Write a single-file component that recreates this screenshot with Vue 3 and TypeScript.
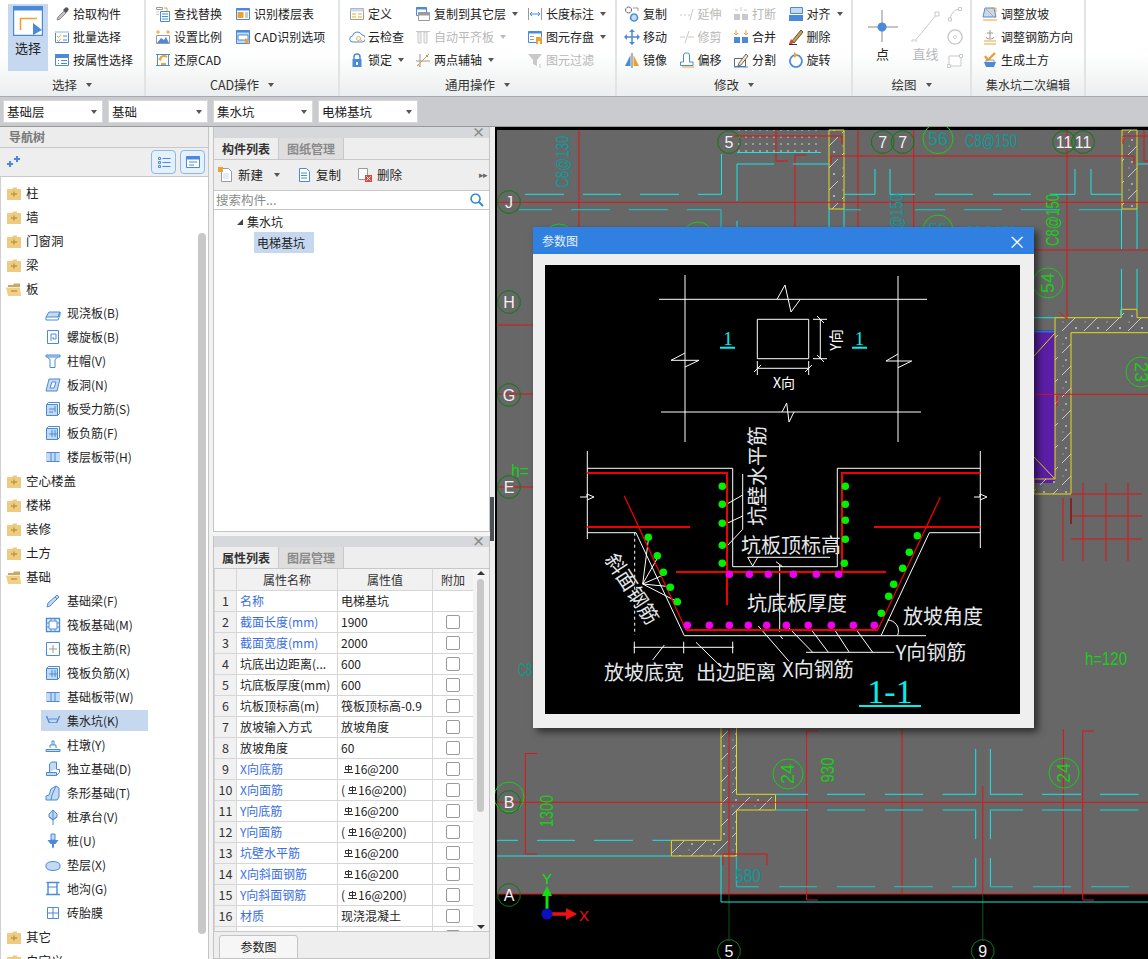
<script setup lang="ts">
import { h } from 'vue'

type Stroke = [string, string?, string?, number?]
const B = '#4a8ad8', O = '#f0a030', G = '#9a9a9a', L = '#c4d9f2', D = '#666', R = '#d84a3a', T = '#c9c9c9'
const icons: Record<string, Stroke[]> = {
  pick: [['M3 14l1-3 6-6 2 2-6 6z', '#c4c4c4', '#8a8a8a'], ['M9 4l3 3 2-2a2 2 0 0 0-3-3z', '#555']],
  batch: [['M1.5 2.5h13v11h-13z', '#fff', B], ['M1 2h14v2h-14z', L], ['M3 7l1.5 1.5L7 5.5M3 11l1.5 1.5L7 9.5', 'none', O], ['M9 7h4M9 11h4', 'none', B]],
  attr: [['M1.5 2.5h13v11h-13z', '#fff', B], ['M1.5 2.5h13v3h-13z', B, B], ['M4 8.5h1M7 8.5h6M4 11.5h1M7 11.5h6', 'none', B]],
  find: [['M1.5 1.5h6v2h-6z', 'none', G], ['M9 2h3v3', 'none', O], ['M5.5 5.5h9v10h-9z', '#fff', B], ['M7 8h6M7 10.5h6M7 13h6', 'none', B], ['M1 6h3M1 8.5h3', 'none', T]],
  floor: [['M1.5 2.5h13v11h-13z', '#fff', B], ['M1.5 2.5h13v2h-13z', B], ['M2.5 6h6v6h-6z', O], ['M10 7h3M10 9h3M10 11h3', 'none', G]],
  scale: [['M1.5 6.5h13v8h-13z', '#fff', G], ['M2 14l4-5 3 2 2-3 3 6z', B], ['M1 3h4M3 1v4', 'none', O], ['M11 3h4M13 1v4', 'none', O]],
  cadopt: [['M1.5 1.5h13v13h-13z', L, B], ['M1.5 1.5h13v2h-13z', B], ['M3 6h10v5H3z', '#fff', B], ['M10 9l5 3-2 1 1 2-1 .5-1-2-2 1z', O]],
  restore: [['M2.5 2.5h11v11h-11z', 'none', B], ['M1 2.5h3M12 2.5h3M1 13.5h3M12 13.5h3', 'none', B], ['M12 5a5 5 0 0 0-7 1', 'none', O, 2], ['M3 7l3 2 1-4z', O], ['M6 12h5', 'none', O, 2]],
  define: [['M1.5 2.5h13v11h-13z', '#fff', G], ['M1.5 2.5h13v3h-13z', L], ['M3 7h4v2H3zM3 10h4v2H3z', '#f6d28a'], ['M9 7h4v2H9zM9 10h4v2H9z', '#f6d28a']],
  cloud: [['M4 13a3 3 0 0 1-.5-6A5 5 0 0 1 13 6a3.5 3.5 0 0 1 0 7z', '#fff', B], ['M9.5 7.5a2 2 0 1 1-.1 0M11 10.5l2 1.5', 'none', O]],
  lock: [['M5 7V5a3 3 0 0 1 6 0v2', 'none', B, 1.5], ['M3.5 7h9v8h-9z', B], ['M7 10h2v3H7z', '#fff']],
  twopt: [['M1 9h14M5 2v13', 'none', G], ['M2 14L14 2', 'none', O], ['M3 12.5l2 2M11 3l2 2', 'none', G]],
  copyl: [['M1.5 1.5h10v8h-10z', '#fff', B], ['M1.5 1.5h10v2h-10z', B], ['M3.5 6.5h11v8h-11z', '#fff', G], ['M3.5 6.5h11v3h-11z', G]],
  autoflat: [['M1 2.5h14', 'none', T], ['M3 3h3v11H3zM9 3h3v11H9z', '#f0f0f0', T]],
  dim: [['M1.5 2v12M14.5 2v12', 'none', G], ['M3 8h10M3 8l2-2M3 8l2 2M13 8l-2-2M13 8l-2 2', 'none', B]],
  save: [['M1.5 2.5h13v11h-13z', '#fff', B], ['M1.5 2.5h13v2h-13z', B], ['M3 7h4v1H3zM3 10h4v1H3z', G], ['M9 8h6v7H9z', O], ['M11 12h2v3h-2z', '#fff']],
  filter: [['M1 2h14l-5 6v6l-4-2V8z', T], ['M12 13h2M12 15h2', 'none', T]],
  copy: [['M4.5 1a3 3 0 1 0 .1 0', '#fff', D], ['M10 8a3.5 3.5 0 1 0 .1 0', L, B, 1.5], ['M9 2h5v3', 'none', G]],
  move: [['M8 2v12M2 8h12', 'none', B, 1.5], ['M8 0l3 3H5zM8 16l3-3H5zM0 8l3-3v6zM16 8l-3-3v6z', B]],
  mirror: [['M8 1v15', 'none', D], ['M6.5 3v11H1z', B], ['M9.5 3v11H15z', O]],
  extend: [['M1 9h2M5 9h2M9 9h2', 'none', T], ['M14 3l-3 11', 'none', T]],
  trim: [['M1 8h5M9 8h6', 'none', T], ['M10 2L6 14', 'none', T]],
  offset: [['M1.5 13.5V10h3V3a2 2 0 0 1 2-2h2a2 2 0 0 1 2 2v7h3.5v3.5z', '#fff', B], ['M3 15h12', 'none', O]],
  breakk: [['M1 8h6v6H1zM9 8h6v6H9z', T], ['M8 1v4M2 4h3M11 4h3', 'none', T]],
  merge: [['M1 8h6v6H1zM9 8h6v6H9z', B], ['M3 1v5M1 4l2 2 2-2M13 1v5M11 4l2 2 2-2', 'none', O]],
  split: [['M1.5 6.5h11v8h-11z', '#fff', D], ['M6 11L13 2l2 2-7 9-3 1z', '#f8e8c0', D], ['M1 15h14', 'none', B]],
  align: [['M2.5 1.5h12v6h-12z', L, B], ['M1 9h14v6H1z', B]],
  del: [['M4 12L13 1l2 2-9 11z', '#c9a060', '#6a5030'], ['M3 10l3 3-2 2H1z', R], ['M1 15.5h8', 'none', '#333']],
  rotate: [['M8 3a6 6 0 1 1-.1 0', '#fff', B, 1.6], ['M6 0l4 3-4 3z', O]],
  adjslope: [['M3 2h9l2 9H1z', L, B], ['M1 14h14M3 2l10 10', 'none', O], ['M9 2h5v4', 'none', O]],
  adjbar: [['M8 1v8M5 4h6', 'none', G], ['M4 8a4 2 0 0 0 8 0', 'none', G], ['M2 12h12M2 15h12', 'none', O]],
  earth: [['M3 4l3 4 7-7', 'none', O, 2.4], ['M2 10h12l-2 5H4z', B], ['M4 10v-2h8v2', 'none', G]],
  newdoc: [['M3.5 1.5h7l3 3v10h-10z', '#fff', G], ['M0 0h5v5H0z', O], ['M5 7h6M5 9h6M5 11h6', 'none', L]],
  copydoc: [['M3.5 1.5h7l3 3v10h-10z', '#fff', B], ['M5 6h6M5 8.5h6M5 11h6', 'none', B]],
  deldoc: [['M1.5 1.5h9v11h-9z', '#fff', G], ['M8 8h7v7H8z', R], ['M9.5 9.5l4 4M13.5 9.5l-4 4', 'none', '#fff']],
  search: [['M6.5 2a4.5 4.5 0 1 0 .1 0', 'none', '#2f8ac8', 1.5], ['M10 10l4 4', 'none', '#2f8ac8', 2]],
  slab: [['M1 12l3-5h11l-2 5z', L, B], ['M13 12l2-5v3l-2 5H1v-3', 'none', B]],
  spiral: [['M2.5 1.5h11v13h-11z', 'none', B], ['M6 12V5h5v5H8V8', 'none', B]],
  cap: [['M1 2h14v2H1z', L, B], ['M2.5 4.5l2.5 2v8h5v-8l2.5-2', 'none', B]],
  hole: [['M1 14l3-12h11l-3 12z', L, B], ['M5 11l2-6h4l-2 6z', '#fff', B]],
  force: [['M1.5 3.5h11v11h-11z', L, B], ['M1.5 3.5l2-2h11v11l-2 2', 'none', B], ['M4 8h6M10 5v6M4 11h4', 'none', B]],
  neg: [['M1.5 3.5h11v11h-11z', L, B], ['M1.5 3.5l2-2h11v11l-2 2', 'none', B], ['M7 5v7M10 5v7M4 9h8', 'none', B]],
  band: [['M1 3h14v10H1z', L], ['M1.5 3.5h13M1.5 12.5h13M6 3v10M10 3v10', 'none', B]],
  beam: [['M2 14l1-4 9-8 2 2-9 9z', L, B], ['M10 4l2 2', 'none', B]],
  raft: [['M1.5 1.5h13v13h-13z', 'none', B, 1.4], ['M4 4h8v8H4z', 'none', B], ['M1 6h3M1 10h3M12 6h3M12 10h3M6 1v3M10 1v3M6 12v3M10 12v3', 'none', B]],
  main: [['M1.5 1.5h13v13h-13z', '#fff', B], ['M8 4v8M4 8h8', 'none', G]],
  pit: [['M1.5 3l3 7h7l3-7', 'none', B, 1.4], ['M1 10l3 4h8l3-4z', L], ['M4 6h8', 'none', B]],
  pier: [['M1 12.5h14v2H1z', L, B], ['M5 11V8h6v3', 'none', B], ['M7 8V4h2v4', 'none', B]],
  indep: [['M1.5 11.5h10v3h-10z', L, B], ['M11.5 14.5l3-3v-3h-3', 'none', B], ['M4.5 11V3l2-2h5v7', L, B]],
  stripe: [['M1 15V11l3-1 2-6 5-3 3 2v9l-2 3z', L, B], ['M6 15l1-5 4-9', 'none', B]],
  pcap: [['M8 1l4 4v3l-4 3-4-3V5z', L, B], ['M8 1v15M5 8l3 3 3-3', 'none', B]],
  pile: [['M6 1h4v6H6z', L, B], ['M2.5 7h11l-3 4H5.500z', B], ['M7 11h2v3L8 15.500 7 14z', B]],
  cushion: [['M1 8a7 3.500 0 0 1 14 0v2a7 3.500 0 0 1-14 0z', L, B]],
  trench: [['M1.500 1.500h13M3 2v11M12 2v11M1 13.500h14', 'none', B, 1.400], ['M3 6h9', 'none', B]],
  brick: [['M2.500 2.500h11v11h-11z', 'none', B], ['M8 2v12M2 8h12', 'none', B]],
  folder: [['M1 4h5l1-1.500h4v1.500h4v11H1z', '#edcb82'], ['M5 9h6M8 6.500v5', 'none', '#c4993a', 1.500]],
  open: [['M2 4h5l1-1.500h6V6H2z', '#c8a862'], ['M0 6.500h14l1 8.500H2z', '#f0cf88'], ['M5 10h6', 'none', '#c4993a', 1.500]],
  plusdots: [['M1 10h6M4 7v6', 'none', B, 2], ['M8 5h6M11 2v6', 'none', B, 2]],
  listv: [['M2.500 3.500h2v2h-2zM2.500 7.500h2v2h-2zM2.500 11.500h2v2h-2z', 'none', B], ['M6.500 4.500h8M6.500 8.500h8M6.500 12.500h8', 'none', B]],
  winv: [['M1.500 2.500h13v11h-13z', '#fff', B], ['M1.500 2.500h13v3h-13z', B], ['M4 8h8M4 11h5', 'none', B]],
  sel: [['M.5 .5h29v29H.500z', '#fff', '#4a8ad8', 1.400], ['M.5 .5h29v4H.500z', '#4a8ad8'], ['M7.500 24V12.500H24', 'none', O, 1.600], ['M20 17l9 7-9 5z', '#4a8ad8']],
  pt: [['M16 2v36M2 19h30', 'none', '#8a8a8a'], ['M16 14.500a4.500 4.500 0 1 0 .1 0', '#4a8ad8']],
  ln: [['M5 34L28 6', 'none', T], ['M3 32h4v4H3zM26 4h4v4h-4z', '#fff', T]],
  arc: [['M3 13c1-6 5-10 10-10', 'none', T], ['M1.500 12h3v3h-3zM11.500 1.500h3v3h-3z', '#fff', T]],
  circ: [['M8 1a7 7 0 1 0 .1 0', '#fff', T, 1.400], ['M8 6.500a1.500 1.500 0 1 0 .1 0', 'none', T]],
  rec: [['M2 4h12v10H2z', '#fff', T], ['M12.500 2.500h3v3h-3zM.5 12.500h3v3h-3z', '#fff', T]],
}

const Ic = (p: { n: string; s?: number }) => {
  const s = p.s || 16
  return h('svg', { viewBox: `0 0 ${s} ${s}`, width: s, height: s, class: 'ic' },
    icons[p.n].map(a => h('path', { d: a[0], fill: a[1] || 'none', stroke: a[2] || 'none', 'stroke-width': a[3] || 1 })))
}
Ic.props = ['n', 's']

type Item = { i?: string; t?: string; off?: boolean; car?: boolean }
type Group = { cls: string; label: string; car?: boolean; big?: { n: string; s: number; t: string; on?: boolean; off?: boolean }[]; cols: Item[][] }
const groups: Group[] = [
  { cls: 'g1', label: '选择', car: true, big: [{ n: 'sel', s: 30, t: '选择', on: true }], cols: [[{ i: 'pick', t: '拾取构件' }, { i: 'batch', t: '批量选择' }, { i: 'attr', t: '按属性选择' }]] },
  { cls: 'g2', label: 'CAD操作', car: true, cols: [[{ i: 'find', t: '查找替换' }, { i: 'scale', t: '设置比例' }, { i: 'restore', t: '还原CAD' }], [{ i: 'floor', t: '识别楼层表' }, { i: 'cadopt', t: 'CAD识别选项' }]] },
  { cls: 'g3', label: '通用操作', car: true, cols: [
    [{ i: 'define', t: '定义' }, { i: 'cloud', t: '云检查' }, { i: 'lock', t: '锁定', car: true }],
    [{ i: 'copyl', t: '复制到其它层', car: true }, { i: 'autoflat', t: '自动平齐板', off: true, car: true }, { i: 'twopt', t: '两点辅轴', car: true }],
    [{ i: 'dim', t: '长度标注', car: true }, { i: 'save', t: '图元存盘', car: true }, { i: 'filter', t: '图元过滤', off: true }]] },
  { cls: 'g4', label: '修改', car: true, cols: [
    [{ i: 'copy', t: '复制' }, { i: 'move', t: '移动' }, { i: 'mirror', t: '镜像' }],
    [{ i: 'extend', t: '延伸', off: true }, { i: 'trim', t: '修剪', off: true }, { i: 'offset', t: '偏移' }],
    [{ i: 'breakk', t: '打断', off: true }, { i: 'merge', t: '合并' }, { i: 'split', t: '分割' }],
    [{ i: 'align', t: '对齐', car: true }, { i: 'del', t: '删除' }, { i: 'rotate', t: '旋转' }]] },
  { cls: 'g5', label: '绘图', car: true, big: [{ n: 'pt', s: 34, t: '点' }, { n: 'ln', s: 34, t: '直线', off: true }], cols: [[{ i: 'arc' }, { i: 'circ' }, { i: 'rec' }]] },
  { cls: 'g6', label: '集水坑二次编辑', cols: [[{ i: 'adjslope', t: '调整放坡' }, { i: 'adjbar', t: '调整钢筋方向' }, { i: 'earth', t: '生成土方' }]] },
]
const combos = ['基础层', '基础', '集水坑', '电梯基坑']

type Node = { t: string; i?: string; f?: 'closed' | 'open'; sel?: boolean }
const tree: Node[] = [
  { t: '柱', f: 'closed' }, { t: '墙', f: 'closed' }, { t: '门窗洞', f: 'closed' }, { t: '梁', f: 'closed' }, { t: '板', f: 'open' },
  { t: '现浇板(B)', i: 'slab' }, { t: '螺旋板(B)', i: 'spiral' }, { t: '柱帽(V)', i: 'cap' }, { t: '板洞(N)', i: 'hole' }, { t: '板受力筋(S)', i: 'force' }, { t: '板负筋(F)', i: 'neg' }, { t: '楼层板带(H)', i: 'band' },
  { t: '空心楼盖', f: 'closed' }, { t: '楼梯', f: 'closed' }, { t: '装修', f: 'closed' }, { t: '土方', f: 'closed' }, { t: '基础', f: 'open' },
  { t: '基础梁(F)', i: 'beam' }, { t: '筏板基础(M)', i: 'raft' }, { t: '筏板主筋(R)', i: 'main' }, { t: '筏板负筋(X)', i: 'neg' }, { t: '基础板带(W)', i: 'band' }, { t: '集水坑(K)', i: 'pit', sel: true },
  { t: '柱墩(Y)', i: 'pier' }, { t: '独立基础(D)', i: 'indep' }, { t: '条形基础(T)', i: 'stripe' }, { t: '桩承台(V)', i: 'pcap' }, { t: '桩(U)', i: 'pile' }, { t: '垫层(X)', i: 'cushion' }, { t: '地沟(G)', i: 'trench' }, { t: '砖胎膜', i: 'brick' },
  { t: '其它', f: 'closed' }, { t: '自定义', f: 'closed' },
]

type Row = { n: string; v: string; blue?: boolean; bar?: 'plain' | 'paren'; nochk?: boolean }
const rows: Row[] = [
  { n: '名称', v: '电梯基坑', blue: true, nochk: true },
  { n: '截面长度(mm)', v: '1900', blue: true }, { n: '截面宽度(mm)', v: '2000', blue: true },
  { n: '坑底出边距离(...', v: '600' }, { n: '坑底板厚度(mm)', v: '600' }, { n: '坑板顶标高(m)', v: '筏板顶标高-0.9' },
  { n: '放坡输入方式', v: '放坡角度' }, { n: '放坡角度', v: '60' },
  { n: 'X向底筋', v: '16@200', blue: true, bar: 'plain' }, { n: 'X向面筋', v: '16@200', blue: true, bar: 'paren' },
  { n: 'Y向底筋', v: '16@200', blue: true, bar: 'plain' }, { n: 'Y向面筋', v: '16@200', blue: true, bar: 'paren' },
  { n: '坑壁水平筋', v: '16@200', blue: true, bar: 'plain' }, { n: 'X向斜面钢筋', v: '16@200', blue: true, bar: 'plain' },
  { n: 'Y向斜面钢筋', v: '16@200', blue: true, bar: 'paren' }, { n: '材质', v: '现浇混凝土', blue: true }, { n: '混凝土类型', v: '(低流动混凝土)', blue: true },
]

/* ---------- CAD model (drawing coordinates equal page pixels) ---------- */
const hseg = (y: number, xs: number[][]) => xs.map(a => `${a[0]},${y} ${a[1]},${y}`)
type Lines = { c: string; w: number; d?: string; p: string[] }
const cad: Lines[] = [
  { c: '#e01515', w: 1, p: ['496,201.300 1148,201.300', '496,801.300 1148,801.300', '496,893 1148,893', '496,324 532,324', '496,393 532,393', '496,486 532,486',
    '1033,249 1148,249', '1033,393.300 1148,393.300', '578,129 578,228', '857,129 857,228', '912.700,129 912.700,228', '1066,129 1066,318', '1058,311 1066,318',
    '733,135 841,135 841,143', '775,129 775,160 787,160', '806,154 794,154 794,228', '830,163 830,155 1133,155 1133,163', '1122,143 1122,135 1148,135', '1143,129 1143,160 1148,160',
    '728,728 728,893', '901,728 901,893', '1062.400,728 1062.400,893', '981.800,785 981.800,893',
    '817,730 805.600,730 805.600,899 817,899', '1093,730 1081.700,730 1081.700,899 1093,899', '536,752.500 524.400,752.500 524.400,853 536,853', '722,864 722,853 766,853 766,864',
    '1056,405 1056,395', '1082,482 1082,560', '1105,482 1105,560', '1127,482 1127,560', '1070,493 1141,493', '1070,515 1141,515', '1070,538 1141,538', '1062,497 1062,560'] },
  { c: '#0a5a0a', w: 1, p: ['728,893 728,940', '981.800,893 981.800,940'] },
  { c: '#18e6e6', w: 1, p: [...hseg(193.300, [[524, 563], [582, 620], [639, 678], [697, 720.500], [843, 874], [889, 914], [934, 972], [992, 1030], [1049, 1074], [1090, 1121]]),
    '720.500,153 720.500,193.300', '874,168 874,193.300', '889,168 889,193.300', '1074,168 1074,193.300', '1090,168 1090,193.300', '736,200 736,163 773,163', '792,163 820,163 828,163', '1136,163 1148,163', '736,220 736,228', '828,208 828,228', '843,208 843,228',
    '1120.500,208 1120.500,248', '1136,208 1136,248', '1120.500,268 1120.500,316', '1136,268 1136,308', '1033,316.700 1054,316.700', '736,151.500 820,151.500',
    ...hseg(793.300, [[774.500, 807], [826, 864], [884, 922], [941.500, 975], [989, 1022], [1041, 1080], [1099, 1137.500]]),
    '974.700,748 974.700,793.300', '989.400,748 989.400,793.300', '974.700,809 974.700,838', '989.400,809 989.400,838', '974.700,857 974.700,885.700', '989.400,857 989.400,885.700',
    ...hseg(839.300, [[496, 517], [536, 574], [593, 632], [651.500, 670]]), '496,855 670,855', '720,855 720,901 1148,901'] },
  { c: '#2ab4b8', w: 1.300, p: [...hseg(208.700, [[518, 551], [570, 609], [628, 667], [686, 720], [843, 860], [914, 944], [963, 1001], [1020, 1059], [1078, 1120]]), '720,208.700 720,228',
    ...hseg(809, [[774.500, 807], [826, 864], [884, 922], [941.500, 975], [989, 1022], [1041, 1080], [1099, 1137.500]]),
    ...hseg(885.700, [[735.500, 758], [778, 816], [836, 874], [893, 932], [951, 975], [989, 1012], [1032, 1070], [1090, 1128]]), '735.500,855 735.500,885.700'] },
]
const walls = [
  '828,129 843,129 843,208 828,208', '1121,129 1136,129 1136,208 1121,208',
  '1054,316.700 1120,316.700 1120,308.300 1136,308.300 1136,316.700 1148,316.700 1148,331.700 1070,331.700 1070,493 1033,493 1033,478 1054,478',
  '720,720 720,839.300 670.400,839.300 670.400,855 735.500,855 735.500,809 774.500,809 774.500,793.300 735.500,793.300 735.500,720',
]
const bubbles = [
  { x: 728, y: 141, t: '5' }, { x: 508, y: 201, t: 'J' }, { x: 881.700, y: 141, t: '7' }, { x: 901.700, y: 141, t: '7' }, { x: 1063, y: 141, t: '11' }, { x: 1082, y: 141, t: '11' },
  { x: 508, y: 301, t: 'H' }, { x: 508, y: 394, t: 'G' }, { x: 508, y: 486, t: 'E' }, { x: 508, y: 801, t: 'B' }, { x: 508, y: 894, t: 'A' }, { x: 728, y: 950, t: '5' }, { x: 981.800, y: 950, t: '9' },
]
const poly = (x: number, y: number, r: number) => Array.from({ length: 12 }, (_, i) => {
  const a = (i * Math.PI) / 6 + Math.PI / 12
  return `${(x + r * Math.cos(a)).toFixed(1)},${(y + r * Math.sin(a)).toFixed(1)}`
}).join(' ')
const rings = [
  { x: 937, y: 137.700, t: '56', c: '#0e9a90', r: 0 }, { x: 937, y: 229, t: '55', c: '#0e9a90', r: 0 }, { x: 558, y: 238, t: '', c: '', r: 0 }, { x: 697, y: 236, t: '', c: '', r: 0 },
  { x: 1047, y: 282, t: '54', c: '#16d016', r: -90 }, { x: 1140, y: 371, t: '23', c: '#16d016', r: 90 }, { x: 787, y: 773, t: '24', c: '#16d016', r: -90 }, { x: 1063, y: 772, t: '24', c: '#16d016', r: -90 }, { x: 508, y: 796, t: '', c: '', r: 0 },
]
const labels = [
  { t: 'C8@130', x: 561.700, y: 160.700, l: 52, r: -90, c: '#0c9a9a' }, { t: 'C8@150', x: 990, y: 140, l: 52, r: 0, c: '#0c9a9a' }, { t: 'C8@150', x: 990, y: 232, l: 52, r: 0, c: '#0c9a9a' },
  { t: 'C8@150', x: 1052, y: 219, l: 52, r: -90, c: '#16d016' }, { t: 'C8@150', x: 896, y: 219, l: 52, r: -90, c: '#0c9a9a' },
  { t: '930', x: 827, y: 769, l: 25, r: -90, c: '#16d016' }, { t: '1300', x: 546, y: 810, l: 32, r: -90, c: '#16d016' }, { t: '580', x: 747, y: 875, l: 26, r: 0, c: '#0c9a9a' },
  { t: 'C8', x: 524, y: 669, l: 14, r: 0, c: '#0e9a80' }, { t: 'h=', x: 519, y: 470, l: 18, r: 0, c: '#16d016' }, { t: 'h=120', x: 1105, y: 658, l: 42, r: 0, c: '#16d016' },
]

/* ---------- section drawing inside the dialog ---------- */
const Z = (x: number, y: number) => `${(540 + x / 3).toFixed(1)},${(440 + y / 3).toFixed(1)}`
const thin = [
  '658,299.300 926,299.300', '660,412 920,412', '684,275 684,442', '897,276 897,442',
  '776,299.300 784,285 790,312 799,299.700', '781,412 785.700,403 788,422 793,412', '684,353 670,360.300 698,360.300 684,367', '897,354 885,361 910.700,361 897,367.700',
  '756.300,319.300 807.700,319.300 807.700,358.700 756.300,358.700 756.300,319.300', '812,319.300 826,319.300', '812,358.700 826,358.700', '819.300,319.300 819.300,358.700', '816,316 823,323', '816,355 823,362',
  '756.300,361 756.300,375', '807.700,361 807.700,375', '756.300,368.300 807.700,368.300', '753,372 760,365', '804,372 811,365',
  [Z(139, 85), Z(575, 85), Z(575, 380), Z(889, 380), Z(889, 85), Z(1318, 85)].join(' '),
  '586.300,451 586.300,539', '979.300,451 979.300,548', '579,497 586,497 586,494 593,497 586,500', '973,497 979,497 979,494 986,497 979,500',
  [Z(139, 278), Z(285, 278), Z(430, 587), Z(1155, 587)].join(' '), [Z(1318, 278), Z(1165, 278), Z(1020, 587)].join(' '),
  [Z(605, 102), Z(605, 268), Z(558, 318)].join(' '), [Z(605, 165), Z(558, 192)].join(' '), [Z(605, 228), Z(558, 250)].join(' '),
  '746.700,557.300 829,557.300', '746.700,557.300 751.700,566 756.700,557.300',
  [Z(716, 375), Z(716, 575)].join(' '), [Z(705, 365), Z(725, 380)].join(' '), [Z(716, 585), Z(725, 597)].join(' '),
  ...[[322, 300], [349, 355], [367, 405], [388, 440], [409, 485]].map(a => [Z(305, 432), Z(a[0], a[1])].join(' ')),
  [Z(278, 622), Z(578, 622)].join(' '), [Z(280, 605), Z(280, 640)].join(' '), [Z(428, 605), Z(428, 640)].join(' '), [Z(575, 605), Z(575, 640)].join(' '),
  [Z(370, 615), Z(335, 660)].join(' '), [Z(465, 607), Z(540, 680)].join(' '), [Z(652, 558), Z(745, 665)].join(' '),
  [Z(795, 637), Z(1060, 637)].join(' '), [Z(745, 565), Z(815, 637)].join(' '), [Z(810, 568), Z(862, 637)].join(' '), [Z(880, 568), Z(925, 637)].join(' '), [Z(945, 568), Z(995, 637)].join(' '),
]
const reds: { p: string; w: number }[] = [
  { p: [Z(139, 99), Z(558, 99), Z(558, 495)].join(' '), w: 2 }, { p: [Z(1318, 99), Z(903, 99), Z(903, 400)].join(' '), w: 2 },
  { p: [Z(139, 261), Z(447, 261)].join(' '), w: 2 }, { p: [Z(999, 261), Z(1318, 261)].join(' '), w: 2 }, { p: [Z(405, 396), Z(1035, 396)].join(' '), w: 2 },
  { p: [Z(435, 570), Z(1010, 570)].join(' '), w: 2 }, { p: [Z(250, 167), Z(435, 570)].join(' '), w: 1.300 }, { p: [Z(1010, 570), Z(1198, 172)].join(' '), w: 1.300 },
]
const ZP = (a: number[]) => ({ x: +(540 + a[0] / 3).toFixed(1), y: +(440 + a[1] / 3).toFixed(1) })
const greens = [[544, 139], [544, 193], [544, 250], [544, 316], [544, 370], [913, 139], [913, 193], [913, 241], [913, 298], [910, 370], [322, 292], [349, 347], [367, 397], [388, 442], [409, 485], [1129, 287], [1105, 337], [1085, 385], [1058, 433], [1043, 469], [1021, 520]].map(ZP)
const pinks = [[565, 403], [625, 403], [682, 403], [757, 403], [826, 403], [893, 403], [439, 556], [505, 556], [565, 556], [622, 556], [677, 556], [736, 556], [802, 556], [871, 556], [937, 556], [1000, 556]].map(ZP)
const notes = [
  { t: '坑壁水平筋', x: 757, y: 476, r: -90 }, { t: '坑板顶标高', x: 790, y: 546, r: 0 }, { t: '坑底板厚度', x: 796, y: 604, r: 0 }, { t: '放坡角度', x: 942, y: 617, r: 0 },
  { t: 'Y向钢筋', x: 930, y: 653, r: 0 }, { t: 'X向钢筋', x: 817, y: 670, r: 0 }, { t: '放坡底宽', x: 643, y: 673, r: 0 }, { t: '出边距离', x: 735, y: 673, r: 0 }, { t: '斜面钢筋', x: 631, y: 589, r: 57 },
]
</script>

<template>
  <div class="app">
    <header class="ribbon">
      <section v-for="g in groups" :key="g.cls" class="group" :class="g.cls">
        <div class="gbody">
          <div v-for="b in g.big || []" :key="b.t" class="big" :class="{ on: b.on, off: b.off }">
            <Ic :n="b.n" :s="b.s" />
            <span>{{ b.t }}</span>
          </div>
          <div v-for="(c, ci) in g.cols" :key="ci" class="col">
            <div v-for="(it, ii) in c" :key="ii" class="it" :class="{ off: it.off }">
              <Ic :n="it.i!" />
              <span v-if="it.t">{{ it.t }}</span>
              <i v-if="it.car" class="caret" />
            </div>
          </div>
        </div>
        <div class="glabel">{{ g.label }}<i v-if="g.car" class="caret" /></div>
      </section>
    </header>

    <div class="tools">
      <div v-for="c in combos" :key="c" class="combo">{{ c }}<i class="caret" /></div>
    </div>

    <main class="main">
      <aside class="nav">
        <div class="navhead">导航树</div>
        <div class="navtool">
          <Ic n="plusdots" />
          <span class="sp" />
          <button class="nb"><Ic n="listv" /></button>
          <button class="nb"><Ic n="winv" /></button>
        </div>
        <div class="tree">
          <div v-for="n in tree" :key="n.t + n.i" class="node" :class="{ child: !n.f, sel: n.sel }">
            <Ic :n="n.i || (n.f === 'open' ? 'open' : 'folder')" />
            <span>{{ n.t }}</span>
          </div>
          <div class="vthumb" />
        </div>
      </aside>
      <div class="midgap" />

      <div class="mid">
        <section class="panel up">
          <div class="strip">×</div>
          <div class="tabs"><b class="tab on">构件列表</b><b class="tab">图纸管理</b></div>
          <div class="ptool">
            <span class="pt"><Ic n="newdoc" />新建<i class="caret" /></span>
            <span class="pt"><Ic n="copydoc" />复制</span>
            <span class="pt"><Ic n="deldoc" />删除</span>
            <span class="more">▸▸</span>
          </div>
          <div class="searchbox"><span>搜索构件...</span><Ic n="search" /></div>
          <div class="plist">
            <div class="pl1"><i class="tri" />集水坑</div>
            <div class="pl2"><span>电梯基坑</span></div>
          </div>
        </section>

        <section class="panel low">
          <div class="strip">×</div>
          <div class="tabs"><b class="tab on">属性列表</b><b class="tab">图层管理</b></div>
          <div class="tablewrap">
            <div class="tclip">
              <table>
                <colgroup><col class="c0"><col class="c1"><col class="c2"><col class="c3"></colgroup>
                <thead><tr><th /><th>属性名称</th><th>属性值</th><th>附加</th></tr></thead>
                <tbody>
                  <tr v-for="(r, i) in rows" :key="i">
                    <td class="num">{{ i + 1 }}</td>
                    <td class="nm" :class="{ blue: r.blue }">{{ r.n }}</td>
                    <td class="vl">
                      <template v-if="r.bar">
                        <span v-if="r.bar === 'paren'">(</span><svg class="rb" viewBox="0 0 9 9" width="9" height="9"><path d="M1.500 1.500h6v3h-6zM4.500 0v7M0 7.500h9" fill="none" stroke="#333" /></svg>{{ r.v }}<span v-if="r.bar === 'paren'">)</span>
                      </template>
                      <template v-else>{{ r.v }}</template>
                    </td>
                    <td class="ck"><span v-if="!r.nochk" class="box" /></td>
                  </tr>
                </tbody>
              </table>
            </div>
            <div class="sb"><i class="up" /><b /><i class="dn" /></div>
          </div>
          <div class="pfoot"><div class="pbtn">参数图</div></div>
        </section>
      </div>

      <div class="split"><i /></div>

      <div class="stage">
        <svg class="cad" viewBox="494 126 654 833" width="654" height="833">
          <defs>
            <pattern id="hatch" width="22" height="22" patternUnits="userSpaceOnUse" patternTransform="translate(3 2)">
              <path d="M2 20L20 2" stroke="#c8c8c8" fill="none" />
              <circle cx="6" cy="5" r="1" fill="#bbb" /><circle cx="16" cy="17" r="1" fill="#ccc" /><circle cx="3" cy="11" r=".7" fill="#aaa" />
            </pattern>
            <pattern id="dots" width="7" height="7" patternUnits="userSpaceOnUse"><rect x="2" y="2" width="2" height="2" fill="#9a9a9a" /></pattern>
          </defs>
          <rect x="494" y="126" width="654" height="833" fill="#000" />
          <rect x="496" y="129" width="652" height="764" fill="#676767" />
          <rect x="736" y="129" width="84" height="22" fill="url(#dots)" />
          <rect x="1033" y="329" width="21" height="153" fill="#5a1fa6" />
          <path d="M1033 330.500h21" stroke="#2d78c8" stroke-width="2" />
          <path d="M1033 355L1054 332M1033 456L1054 478" stroke="#e8d820" fill="none" />
          <polygon v-for="w in walls" :key="w" :points="w" fill="url(#hatch)" stroke="#e2da20" />
          <template v-for="g in cad" :key="g.c">
            <polyline v-for="(p, i) in g.p" :key="i" :points="p" fill="none" :stroke="g.c" :stroke-width="g.w" />
          </template>
          <path d="M1070 497v26" stroke="#8a1010" stroke-width="1.500" />
          <g v-for="r in rings" :key="r.x + '' + r.y">
            <circle :cx="r.x" :cy="r.y" r="15" fill="none" stroke="#16d016" />
            <text v-if="r.t" class="nm-t" :fill="r.c" :transform="`translate(${r.x} ${r.y}) rotate(${r.r})`" dy="6" text-anchor="middle">{{ r.t }}</text>
          </g>
          <text v-for="l in labels" :key="l.t + l.x" class="lb-t" :fill="l.c" :textLength="l.l" lengthAdjust="spacingAndGlyphs" text-anchor="middle" dy="6" :transform="`translate(${l.x} ${l.y}) rotate(${l.r})`">{{ l.t }}</text>
          <g v-for="b in bubbles" :key="b.x + b.t">
            <polygon :points="poly(b.x, b.y, 11.500)" fill="none" stroke="#0e7a0e" />
            <text class="ax-t" :x="b.x" :y="b.y + 6" text-anchor="middle">{{ b.t }}</text>
          </g>
          <path d="M546 913V890" stroke="#10e010" stroke-width="3" /><path d="M546 885l-5 10h10z" fill="#10e010" />
          <path d="M546 913H572" stroke="#f01010" stroke-width="3.500" /><path d="M576 913l-11-6v12z" fill="#f01010" />
          <circle cx="546" cy="913" r="5.500" fill="#0a10c0" />
          <text class="xy-t" x="546" y="883" fill="#10e010" text-anchor="middle">Y</text>
          <text class="xy-t" x="583" y="920" fill="#f01010" text-anchor="middle">X</text>
        </svg>

        <div class="dialog">
          <div class="dtitle"><span>参数图</span><b>×</b></div>
          <div class="dbody">
            <svg viewBox="544 265 475 449" width="475" height="449" class="dsvg">
              <rect x="544" y="265" width="475" height="449" fill="#000" />
              <path d="M633.700 532.700V635" stroke="#fff" stroke-dasharray="3 3" />
              <path d="M886.700 620a11 11 0 0 1 10 15" stroke="#fff" fill="none" />
              <polyline v-for="(p, i) in thin" :key="i" :points="p" fill="none" stroke="#fff" />
              <polyline v-for="(r, i) in reds" :key="i" :points="r.p" fill="none" stroke="#f00000" :stroke-width="r.w" />
              <circle v-for="(c, i) in greens" :key="i" :cx="c.x" :cy="c.y" r="3.800" fill="#00f000" />
              <circle v-for="(c, i) in pinks" :key="i" :cx="c.x" :cy="c.y" r="3.800" fill="#f000f0" />
              <text v-for="n in notes" :key="n.t" class="note" :transform="`translate(${n.x} ${n.y}) rotate(${n.r})`" text-anchor="middle" dy="7">{{ n.t }}</text>
              <text class="sm" x="783" y="388" text-anchor="middle">X向</text>
              <text class="sm" transform="translate(840 340) rotate(-90)" text-anchor="middle">Y向</text>
              <text class="sec" x="727" y="345" font-size="19" text-anchor="middle">1</text>
              <path d="M719 347.700h15M851 347.700h15" stroke="#00f0f0" stroke-width="2" />
              <text class="sec" x="858.500" y="345" font-size="19" text-anchor="middle">1</text>
              <text class="sec" x="889" y="703" font-size="34" text-anchor="middle">1-1</text>
              <path d="M858 706h62" stroke="#00f0f0" stroke-width="2" />
            </svg>
          </div>
        </div>
      </div>
    </main>
  </div>
</template>

<style>
html, body { margin: 0; background: #fff; overflow: hidden; }
</style>

<style scoped>
.app { width: 1148px; height: 959px; display: flex; flex-direction: column; overflow: hidden; font: 12px/16px "Noto Sans CJK SC", "Noto Sans", sans-serif; color: #222; background: #fff; }
.ic { display: block; flex: none; }
.ribbon { height: 96px; flex: none; display: flex; background: linear-gradient(#fff 55%, #ecefef); border-bottom: 1px solid #a8aaad; box-sizing: content-box; }
.group { display: flex; flex-direction: column; flex: none; box-sizing: border-box; border-right: 2px solid #e2e4e4; }
.g1 { width: 146px; } .g2 { width: 194px; } .g3 { width: 277px; } .g4 { width: 236px; } .g5 { width: 119px; } .g6 { width: 114px; }
.gbody { height: 71px; padding-top: 2px; display: flex; }
.g1 .gbody { padding-left: 8px; }
.g2 .gbody { padding-left: 9px; } .g2 .col:first-child { width: 80px; }
.g3 .gbody { padding-left: 9px; } .g3 .col:nth-child(1) { width: 66px; } .g3 .col:nth-child(2) { width: 112px; }
.g4 .gbody { padding-left: 7px; } .g4 .col { width: 54.500px; }
.g5 .gbody { padding-left: 8px; } .g6 .gbody { padding-left: 10px; }
.col { display: flex; flex-direction: column; flex: none; }
.it { height: 23px; display: flex; align-items: center; gap: 3px; white-space: nowrap; }
.off { color: #b8b8b8; }
.big { display: flex; flex-direction: column; align-items: center; flex: none; box-sizing: border-box; }
.big span { margin-top: 4px; font-size: 13px; }
.g1 .big { width: 40px; height: 67px; margin: 2px 6px 0 0; padding-top: 2px; background: #c6d8ef; }
.g1 .big span { margin-top: 4px; }
.g5 .big { width: 43px; padding-top: 6px; }
.glabel { height: 23px; display: flex; align-items: center; justify-content: center; gap: 6px; color: #333; font-size: 12.500px; }
.g6 .glabel { padding-top: 3px; font-size: 12px; }
.caret { display: inline-block; width: 0; height: 0; border: 3.500px solid transparent; border-top: 4px solid #555; border-bottom-width: 0; margin-left: 3px; flex: none; }
.off .caret { border-top-color: #bbb; }
.tools { height: 29px; flex: none; display: flex; align-items: center; gap: 5px; padding-left: 3px; background: #c9cbcf; }
.combo { width: 100px; height: 23px; box-sizing: border-box; background: #fff; border: 1px solid #d8d8d8; padding-left: 3px; display: flex; align-items: center; justify-content: space-between; padding-right: 5px; font-size: 12.500px; }
.main { flex: 1; min-height: 0; display: flex; border-top: 1px solid #999; }
.nav { width: 208px; flex: none; display: flex; flex-direction: column; border-right: 1px solid #c4c4c4; box-sizing: content-box; }
.navhead { height: 20px; line-height: 20px; padding-left: 9px; background: #ececec; color: #777; font-weight: 700; border-bottom: 1px solid #c8c8c8; }
.navtool { height: 28px; display: flex; align-items: center; padding-left: 6px; gap: 4px; padding-right: 3px; background: #eeeeee; border-bottom: 1px solid #c8c8c8; }
.sp { flex: 1; }
.nb { width: 25px; height: 24px; padding: 0; border: 1px solid #8ab8ee; border-radius: 4px; background: #e4f0fc; display: flex; align-items: center; justify-content: center; }
.tree { flex: 1; position: relative; overflow: hidden; padding-top: 4px; border-left: 1px solid #d0d0d0; }
.node { height: 24px; display: flex; align-items: center; gap: 4px; padding-left: 5px; font-size: 12.500px; position: relative; }
.node.child { padding-left: 44px; gap: 6px; font-size: 12px; width: 107px; height: 24px; }
.node.sel::before { content: ""; position: absolute; left: 40px; top: 1px; width: 107px; height: 21px; background: #c6d8ef; z-index: -1; }
.tree { isolation: isolate; }
.vthumb { position: absolute; left: 197px; top: 56px; width: 8px; height: 701px; border-radius: 4px; background: #c8c8c8; }
.midgap { width: 4px; flex: none; background: #f2f2f2; }
.mid { width: 277px; flex: none; display: flex; flex-direction: column; gap: 4px; background: #f4f4f4; }
.panel { display: flex; flex-direction: column; border: 1px solid #c4c4c4; border-top: none; background: #fff; min-height: 0; }
.up { height: 404px; flex: none; }
.low { flex: 1; }
.strip { height: 11px; line-height: 10px; text-align: right; padding-right: 4px; background: #d6d8db; color: #888; font-size: 13px; font-weight: 700; flex: none; }
.tabs { height: 21px; flex: none; display: flex; background: #eee; border-bottom: 1px solid #c8c8c8; }
.tab { width: 64px; line-height: 21px; text-align: center; font-weight: 700; color: #333; border-right: 1px solid #c8c8c8; }
.tab:not(.on) { background: #dedede; color: #8a8a8a; }
.ptool { height: 30px; flex: none; display: flex; align-items: center; padding-left: 4px; gap: 16px; background: #eee; border-bottom: 1px solid #c8c8c8; position: relative; }
.pt { display: flex; align-items: center; gap: 4px; font-size: 12.500px; }
.pt .caret { margin-left: 7px; }
.more { position: absolute; right: 2px; font-size: 9px; color: #666; letter-spacing: -1px; }
.searchbox { height: 18px; flex: none; display: flex; align-items: center; justify-content: space-between; padding: 0 4px 0 2px; color: #8a8a8a; border-bottom: 1px solid #c8c8c8; font-size: 12.500px; }
.plist { padding-top: 1px; }
.pl1 { height: 21px; display: flex; align-items: center; padding-left: 23px; gap: 4px; }
.tri { width: 0; height: 0; border-style: solid; border-width: 0 0 6px 6px; border-color: transparent transparent #444 transparent; }
.pl2 { padding-left: 40px; height: 21px; }
.pl2 span { display: inline-block; width: 60px; line-height: 21px; height: 21px; padding-left: 3px; box-sizing: border-box; background: #c6d8ef; }
.tablewrap { flex: 1; min-height: 0; display: flex; }
.tclip { width: 259px; overflow: hidden; }
table { width: 259px; table-layout: fixed; border-collapse: collapse; }
.c0 { width: 22px; } .c1 { width: 101px; } .c2 { width: 95px; } .c3 { width: 41px; }
th { height: 21px; padding: 0; background: #f1f1f1; font-weight: 400; color: #333; border: 1px solid #d6d6d6; border-top: none; }
td { height: 20px; padding: 0; border: 1px solid #d6d6d6; white-space: nowrap; overflow: hidden; }
.num { text-align: center; background: #f1f1f1; color: #333; font-size: 12.500px; }
.nm { padding-left: 3px; } .vl { padding-left: 3px; }
.blue { color: #3a6ee0; }
.rb { margin: 0 1px 3px 3px; vertical-align: middle; }
.ck { text-align: center; }
.box { display: block; width: 12px; height: 12px; margin: 0 auto; border: 1px solid #9a9a9a; border-radius: 2px; }
.sb { flex: 1; position: relative; background: #f4f4f4; }
.sb .up, .sb .dn { position: absolute; left: 4px; width: 0; height: 0; border: 4px solid transparent; }
.sb .up { top: 2px; border-bottom: 4px solid #333; border-top: none; }
.sb .dn { bottom: 2px; border-top: 4px solid #333; border-bottom: none; }
.sb b { position: absolute; left: 4px; top: 10px; width: 7px; height: 233px; border-radius: 4px; background: #c8c8c8; }
.pfoot { height: 23px; flex: none; background: #eee; padding: 3px 0 0 5px; border-top: 1px solid #c8c8c8; }
.pbtn { width: 79px; height: 24px; text-align: center; line-height: 22px; background: #f6f6f6; border: 1px solid #c4c4c4; border-radius: 3px 3px 0 0; box-sizing: border-box; }
.split { width: 5px; flex: none; background: #eee; position: relative; }
.split i { position: absolute; top: 370px; left: 0; width: 4px; height: 44px; background: #4a5058; }
.stage { flex: 1; position: relative; overflow: hidden; }
.cad { display: block; }
.cad text { font-family: "Liberation Sans", sans-serif; }
.cad .nm-t { font-size: 18px; }
.cad .lb-t { font-size: 18px; }
.cad .ax-t { font-size: 16px; fill: #f2f2f2; }
.cad .xy-t { font-size: 15px; }
.dialog { position: absolute; left: 38px; top: 100px; width: 501px; height: 501px; background: #efefef; box-shadow: 4px 4px 7px rgba(0, 0, 0, .55); }
.dtitle { height: 27px; background: #2f80e0; color: #e8f1fb; display: flex; align-items: center; justify-content: space-between; padding: 0 8px 0 9px; }
.dtitle b { font-size: 18px; color: #fff; font-weight: 400; }
.dbody { padding: 11px 14px 14px 12px; }
.dsvg { display: block; }
.dsvg .note { font-size: 20px; fill: #e4e8ea; }
.dsvg .sm { font-size: 14px; fill: #fff; }
.dsvg .sec { font-family: "Liberation Serif", serif; fill: #00f0f0; }
</style>
